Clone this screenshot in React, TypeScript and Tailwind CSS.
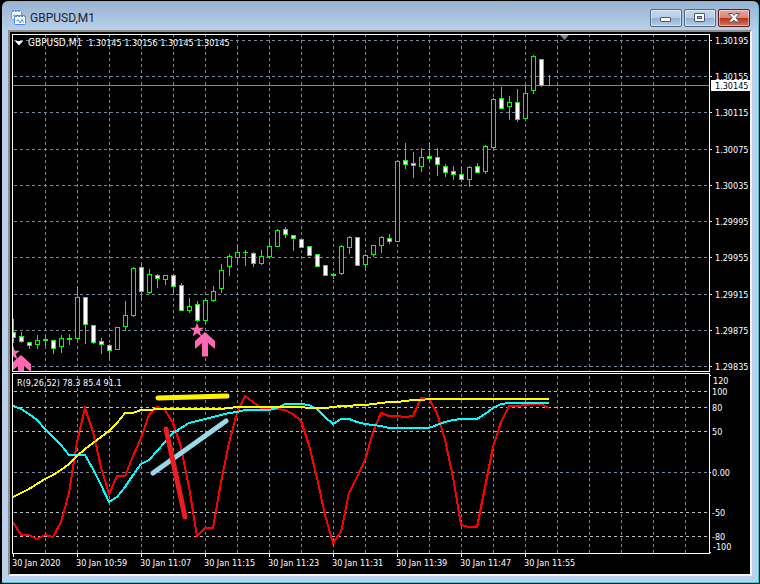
import type { ReactNode } from 'react';

type CandleKind = 'up' | 'down' | 'doji';
// high, body top, body bottom, low, kind
type Candle = [number, number, number, number, CandleKind];

const BAR = 8;
const MAIN_TOP = 35;
const SUB_TOP = 374;

const candles: Candle[] = [
  [319, 332, 337, 342, 'down'],
  [332, 336, 341, 342, 'down'],
  [342, 342, 345, 348, 'down'],
  [335, 340, 344, 348, 'up'],
  [335, 339, 340, 345, 'doji'],
  [340, 340, 348, 353, 'down'],
  [335, 338, 346, 352, 'up'],
  [334, 338, 339, 344, 'doji'],
  [286, 297, 338, 340, 'up'],
  [297, 297, 324, 343, 'down'],
  [325, 325, 342, 343, 'down'],
  [338, 341, 344, 353, 'down'],
  [344, 345, 350, 359, 'down'],
  [327, 327, 349, 349, 'up'],
  [301, 315, 326, 330, 'up'],
  [267, 268, 315, 316, 'up'],
  [263, 267, 291, 300, 'down'],
  [269, 274, 292, 293, 'up'],
  [274, 275, 278, 287, 'down'],
  [275, 275, 279, 284, 'up'],
  [274, 275, 286, 293, 'down'],
  [283, 285, 310, 310, 'down'],
  [298, 306, 310, 312, 'up'],
  [301, 304, 320, 321, 'down'],
  [298, 300, 320, 324, 'up'],
  [286, 291, 300, 301, 'up'],
  [264, 270, 288, 292, 'up'],
  [254, 256, 266, 275, 'up'],
  [245, 252, 257, 264, 'up'],
  [250, 252, 252, 265, 'doji'],
  [252, 253, 263, 266, 'down'],
  [250, 256, 263, 264, 'up'],
  [240, 246, 256, 257, 'up'],
  [229, 230, 246, 246, 'up'],
  [227, 229, 234, 237, 'down'],
  [235, 235, 238, 250, 'down'],
  [238, 239, 247, 247, 'down'],
  [246, 246, 255, 255, 'down'],
  [254, 254, 266, 266, 'down'],
  [265, 265, 275, 275, 'down'],
  [273, 274, 275, 278, 'doji'],
  [245, 246, 273, 274, 'up'],
  [236, 237, 247, 253, 'up'],
  [237, 237, 265, 265, 'down'],
  [254, 255, 264, 270, 'up'],
  [245, 245, 254, 256, 'up'],
  [236, 237, 245, 252, 'up'],
  [234, 238, 241, 243, 'down'],
  [160, 161, 241, 241, 'up'],
  [143, 160, 164, 168, 'down'],
  [152, 163, 165, 177, 'down'],
  [148, 157, 166, 171, 'up'],
  [142, 156, 158, 161, 'down'],
  [148, 157, 164, 175, 'down'],
  [164, 166, 172, 176, 'down'],
  [166, 171, 174, 179, 'down'],
  [167, 174, 179, 181, 'down'],
  [166, 167, 179, 186, 'up'],
  [163, 166, 172, 172, 'down'],
  [145, 146, 171, 173, 'up'],
  [98, 99, 147, 150, 'up'],
  [87, 98, 108, 108, 'down'],
  [96, 102, 106, 119, 'up'],
  [89, 102, 119, 121, 'down'],
  [86, 93, 118, 118, 'up'],
  [55, 56, 90, 93, 'up'],
  [59, 59, 85, 86, 'down'],
  [75, 85, 85, 85, 'doji'],
];

const fast = [
  522, 535, 535, 539, 535, 537, 522, 493, 442, 408, 432, 467, 494, 476, 476, 456, 438, 415, 407, 410, 423, 447, 487,
  536, 528, 528, 482, 443, 413, 396, 402, 408, 408, 409, 410, 414, 421, 445, 478, 515, 543, 532, 493, 477, 460, 432,
  413, 416, 416, 417, 416, 398, 399, 413, 440, 477, 525, 527, 527, 487, 447, 422, 406, 406, 405, 404, 404, 408,
];

const middle = [
  406, 409, 414, 420, 429, 437, 445, 455, 455, 455, 469, 485, 502, 497, 487, 475, 464, 460, 451, 442, 433, 428, 423,
  421, 419, 417, 415, 413, 412, 410, 410, 410, 410, 408, 404, 404, 404, 405, 409, 417, 424, 419, 419, 422, 424, 425,
  426, 428, 428, 428, 428, 428, 428, 425, 422, 420, 419, 419, 419, 414, 408, 404, 403, 403, 403, 403, 403, 403,
];

const slow = [
  497, 493, 489, 484, 479, 475, 470, 464, 456, 449, 443, 437, 431, 423, 413, 413, 410, 410, 409, 409, 409, 409, 409,
  409, 409, 409, 409, 408, 407, 407, 407, 407, 407, 407, 407, 407, 407, 408, 408, 408, 407, 406, 406, 405, 405, 404,
  403, 402, 402, 401, 400, 400, 399, 399, 399, 399, 399, 399, 399, 399, 399, 399, 399, 399, 399, 399, 399, 399,
];

const prices = [
  { y: 40, label: '1.30195' },
  { y: 76, label: '1.30155' },
  { y: 112, label: '1.30115' },
  { y: 149, label: '1.30075' },
  { y: 185, label: '1.30035' },
  { y: 221, label: '1.29995' },
  { y: 257, label: '1.29955' },
  { y: 294, label: '1.29915' },
  { y: 330, label: '1.29875' },
  { y: 366, label: '1.29835' },
];

const levels = [
  { y: 391, label: '100' },
  { y: 407, label: '80' },
  { y: 431, label: '50' },
  { y: 472, label: '0.00' },
  { y: 512, label: '-50' },
  { y: 536, label: '-80' },
];

const times = [
  '30 Jan 2020',
  '30 Jan 10:59',
  '30 Jan 11:07',
  '30 Jan 11:15',
  '30 Jan 11:23',
  '30 Jan 11:31',
  '30 Jan 11:39',
  '30 Jan 11:47',
  '30 Jan 11:55',
];

const toPoints = (values: number[]) => values.map((y, i) => `${i * BAR},${y}`).join(' ');

function VerticalGrid({ top, bottom }: { top: number; bottom: number }) {
  return (
    <g stroke="#778899" strokeDasharray="3 3" shapeRendering="crispEdges">
      {Array.from({ length: 80 }, (_, i) => (
        <line key={i} x1={i * 32 + 32.5} x2={i * 32 + 32.5} y1={top} y2={bottom} />
      ))}
    </g>
  );
}

function HorizontalLine({ y, color }: { y: number; color: string }) {
  return (
    <line x1={1} x2="100%" y1={y + 0.5} y2={y + 0.5} stroke={color} strokeDasharray="3 3" shapeRendering="crispEdges" />
  );
}

function CandleBar({ index, candle }: { index: number; candle: Candle }) {
  const [high, top, bottom, low, kind] = candle;
  const x = index * BAR;
  return (
    <g shapeRendering="crispEdges">
      <rect x={x} y={high} width={1} height={low - high + 1} fill="#00ff00" />
      <rect x={x - 2} y={top} width={5} height={bottom - top + 1} fill="#00ff00" />
      {kind !== 'doji' && (
        <rect x={x - 1} y={top + 1} width={3} height={bottom - top - 1} fill={kind === 'up' ? '#000' : '#fff'} />
      )}
    </g>
  );
}

function BuySignal({ x, y }: { x: number; y: number }) {
  return (
    <g transform={`translate(${x} ${y})`} fill="#ff69b4">
      <path d="M-8 -9.5 L-6.2 -4.2 H-1 L-5.2 -1 L-3.6 4.6 L-8 1.2 L-12.4 4.6 L-10.8 -1 L-15 -4.2 H-9.8 Z" />
      <path d="M0 0 L10 9 V17 L3 11 V24.5 H-3 V11 L-10 17 V9 Z" />
    </g>
  );
}

function WindowButton({ label, danger, children }: { label: string; danger?: boolean; children: ReactNode }) {
  const tone = danger
    ? 'border-[#5a1a22] bg-[linear-gradient(#e9a79c_0%,#d98576_48%,#b9351d_52%,#d2785c_100%)]'
    : 'border-[#56667f] bg-[linear-gradient(#c4d8ec_0%,#b4cce4_48%,#91b0d0_52%,#b2cfe8_100%)]';
  return (
    <button
      type="button"
      aria-label={label}
      className={`flex h-[18px] w-8 items-center justify-center rounded-[2px] border shadow-[inset_0_0_0_1px_rgba(255,255,255,0.45)] ${tone}`}
    >
      {children}
    </button>
  );
}

function TitleBar() {
  return (
    <header className="flex h-[29px] items-center pt-1 pr-[2px] pl-[3px]">
      <svg width="15" height="15" viewBox="0 0 15 15" aria-hidden="true">
        <rect x="0.5" y="0.5" width="10" height="9" rx="1" fill="#fff" stroke="#5b9bf0" />
        <path d="M1 1.5h9" stroke="#5b9bf0" strokeDasharray="2 1" />
        <path d="M2 6.5l1.5-2 1.5 2 1-2" fill="none" stroke="#5b9bf0" />
        <rect x="3.5" y="5.5" width="11" height="9" rx="1" fill="#fff" stroke="#4a8be8" />
        <path d="M4 6.5h10" stroke="#4a8be8" strokeDasharray="2 1" />
        <path d="M5.5 11.5l1.5-2 2 3.5 2-3.5 1.5 3" fill="none" stroke="#4a8be8" />
      </svg>
      <h1 className="ml-1 font-['Roboto',sans-serif] text-xs text-[#1b2430]">GBPUSD,M1</h1>
      <div className="ml-auto flex gap-[2px]">
        <WindowButton label="Minimize">
          <svg width="12" height="12" viewBox="0 0 12 12">
            <rect x="0.5" y="5.5" width="10" height="4" rx="0.5" fill="#fff" stroke="#535666" />
          </svg>
        </WindowButton>
        <WindowButton label="Maximize">
          <svg width="12" height="12" viewBox="0 0 12 12">
            <rect x="0.5" y="1.5" width="10" height="8" rx="0.5" fill="#fff" stroke="#535666" />
            <rect x="3.5" y="4.5" width="4" height="2" fill="#9db9d6" stroke="#535666" />
          </svg>
        </WindowButton>
        <WindowButton label="Close" danger>
          <svg width="12" height="12" viewBox="0 0 12 12">
            <path
              d="M.5 1.5h3.7L6 3.4l1.8-1.9h3.7L8 5.7l3.5 4.3H7.8L6 8.1 4.2 10H.5L4 5.7z"
              fill="#fff"
              stroke="#535666"
            />
          </svg>
        </WindowButton>
      </div>
    </header>
  );
}

function PricePane() {
  return (
    <div className="relative border border-white">
      <svg className="block h-[336px] w-full" role="img" aria-label="GBPUSD one minute candles">
        <g transform={`translate(0 -${MAIN_TOP})`}>
          <VerticalGrid top={34} bottom={371} />
          {prices.map((p) => (
            <HorizontalLine key={p.label} y={p.y} color="#778899" />
          ))}
          <rect x={0} y={85} width="100%" height={1} fill="#778899" />
          <path d="M547 35h9l-4.5 5z" fill="#778899" />
          {candles.map((c, i) => (
            <CandleBar key={i} index={i} candle={c} />
          ))}
          <BuySignal x={8} y={355} />
          <BuySignal x={192} y={332} />
        </g>
      </svg>
      <div className="absolute top-[2px] left-[2px] flex items-center text-white">
        <button type="button" aria-label="One click trading" className="flex h-3 w-[13px] items-center">
          <svg width="8" height="5" viewBox="0 0 8 5">
            <path d="M0 0h8L4 4.5z" fill="#fff" />
          </svg>
        </button>
        <span className="text-[10px] leading-3">GBPUSD,M1</span>
        <span className="ml-[6px] leading-3">1.30145 1.30156 1.30145 1.30145</span>
      </div>
    </div>
  );
}

function PriceAxis() {
  return (
    <svg className="block h-[338px] w-10 text-white">
      <g transform="translate(0 -34)" fill="currentColor">
        {prices.map((p) => (
          <g key={p.label}>
            <rect x={0} y={p.y} width={2} height={1} />
            <text x={5} y={p.y + 4}>
              {p.label}
            </text>
          </g>
        ))}
        <rect x={1} y={80} width={39} height={11} />
        <text x={5} y={89} fill="#000">
          1.30145
        </text>
      </g>
    </svg>
  );
}

function IndicatorPane() {
  return (
    <div className="relative border border-white">
      <svg className="block h-[179px] w-full" role="img" aria-label="R indicator">
        <g transform={`translate(0 -${SUB_TOP})`} fill="none">
          <VerticalGrid top={376} bottom={553} />
          {levels.map((l) => (
            <HorizontalLine key={l.label} y={l.y} color={l.label === '0.00' ? '#778899' : '#c0c0c0'} />
          ))}
          <g strokeWidth={2} shapeRendering="crispEdges">
            <polyline points={toPoints(fast)} stroke="#ff0000" />
            <polyline points={toPoints(middle)} stroke="#00ffff" />
            <polyline points={toPoints(slow)} stroke="#ffff00" />
          </g>
          <g strokeWidth={5} strokeLinecap="round">
            <path d="M145 398L214 396" stroke="#fff200" />
            <path d="M140 473L213 421" stroke="#99d9ea" />
            <path d="M153 429L172 517" stroke="#ed1c24" />
          </g>
        </g>
      </svg>
      <span className="absolute top-[3px] left-1 leading-3 text-white">R(9,26,52) 78.3 85.4 91.1</span>
    </div>
  );
}

function IndicatorAxis() {
  return (
    <svg className="block h-[181px] w-10 text-white">
      <g transform="translate(0 -373)" fill="currentColor">
        <rect x={0} y={375} width={1} height={1} />
        <text x={3} y={384}>
          120
        </text>
        {levels.map((l) => (
          <text key={l.label} x={2} y={l.y + 4}>
            {l.label}
          </text>
        ))}
        <rect x={0} y={472} width={1} height={1} />
        <text x={3} y={550}>
          -100
        </text>
        <rect x={0} y={552} width={1} height={1} />
      </g>
    </svg>
  );
}

function TimeAxis() {
  return (
    <svg className="block h-5 w-full overflow-visible text-white">
      <g fill="currentColor">
        {times.map((t, i) => (
          <g key={t}>
            <rect x={i * 64 + 1} y={0} width={1} height={3} />
            <text x={i * 64} y={12}>
              {t}
            </text>
          </g>
        ))}
      </g>
    </svg>
  );
}

export default function App() {
  return (
    <div className="min-h-screen bg-black pt-px pr-px pb-px pl-[2px]">
      <main className="rounded-t-md border-r border-b border-[#2fd0e4] bg-[linear-gradient(#98b3d1_0px,#b9d1ea_30px)] pr-[6px] pb-[6px] pl-[6px]">
        <TitleBar />
        <section className="border-2 border-t-[#8e8e8e] border-r-[#f5f1ee] border-b-[#f5f1ee] border-l-[#8e8e8e] bg-black pt-[2px] pl-[2px] font-['DejaVu_Sans_Condensed','DejaVu_Sans',sans-serif] text-[9px]">
          <div className="grid grid-cols-[minmax(0,1fr)_auto] gap-y-px">
            <PricePane />
            <PriceAxis />
            <IndicatorPane />
            <IndicatorAxis />
          </div>
          <TimeAxis />
        </section>
      </main>
    </div>
  );
}
